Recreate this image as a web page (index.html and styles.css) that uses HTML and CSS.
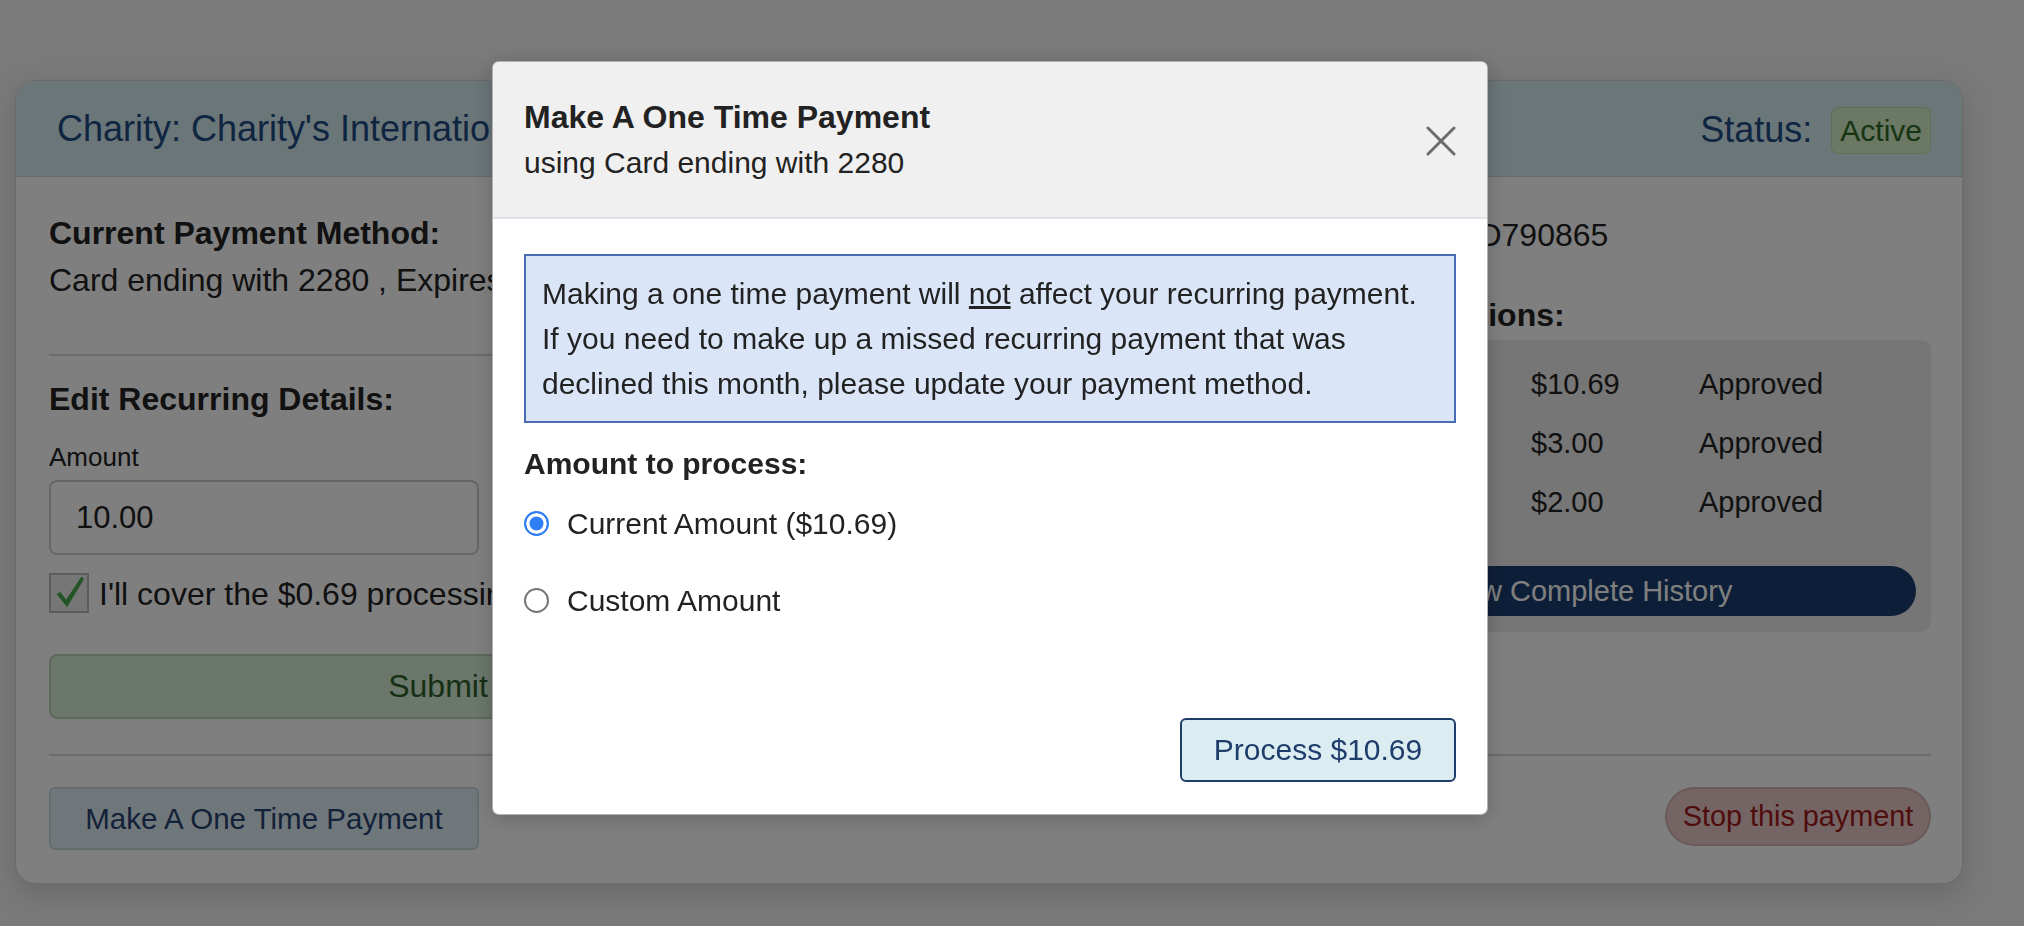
FILE: index.html
```html
<!DOCTYPE html>
<html lang="en">
<head>
  <meta charset="UTF-8" />
  <meta name="viewport" content="width=device-width, initial-scale=1.0" />
  <title>Recurring Donation</title>
  <link rel="stylesheet" href="styles.css">
</head>
<body>
  <div class="page">
    <section class="card">
      <header class="card-head">
        <h2>Charity: Charity's International</h2>
        <div class="status">Status: <span class="badge">Active</span></div>
      </header>
      <div class="card-body">
        <div class="cols">
          <div class="col-left">
            <p class="label-bold">Current Payment Method:</p>
            <p class="text">Card ending with 2280 , Expires</p>
            <hr class="sep">
            <p class="label-bold edit-title">Edit Recurring Details:</p>
            <label class="small-label" for="amount">Amount</label>
            <input id="amount" class="amount-input" type="text" value="10.00">
            <div class="cover-row">
              <span class="fake-check">
                <svg width="40" height="40" viewBox="0 0 40 40"><path d="M8 21 L12 19 L18 27 L34 3 L37 5 L19 35 Z" fill="#44a84a"/></svg>
              </span>
              <span>I'll cover the $0.69 processing fee</span>
            </div>
            <button class="btn-submit" type="button">Submit</button>
          </div>
          <div class="col-right">
            <p class="text ref-line">Reference ID: RD790865</p>
            <p class="label-bold tx-title">Recent Transactions:</p>
            <div class="tx-box">
              <div class="tx-row"><span>06/01/2024</span><span>$10.69</span><span>Approved</span></div>
              <div class="tx-row"><span>05/14/2024</span><span>$3.00</span><span>Approved</span></div>
              <div class="tx-row"><span>05/01/2024</span><span>$2.00</span><span>Approved</span></div>
              <button class="btn-history" type="button">View Complete History</button>
            </div>
          </div>
        </div>
        <hr class="sep bottom-sep">
        <div class="card-foot">
          <button class="btn-light" type="button">Make A One Time Payment</button>
          <button class="btn-stop" type="button">Stop this payment</button>
        </div>
      </div>
    </section>
  </div>

  <div class="backdrop"></div>

  <div class="modal-wrap">
    <div class="modal" role="dialog">
      <div class="modal-head">
        <div>
          <div class="modal-title">Make A One Time Payment</div>
          <div class="modal-sub">using Card ending with 2280</div>
        </div>
        <svg class="close" width="30" height="30" viewBox="0 0 30 30">
          <path d="M2 2 L28 28 M28 2 L2 28" stroke="#6c6c6c" stroke-width="3" stroke-linecap="round"/>
        </svg>
      </div>
      <div class="modal-body">
        <div class="info">
          Making a one time payment will <u>not</u> affect your recurring payment.
          If you need to make up a missed recurring payment that was
          declined this month, please update your payment method.
        </div>
        <div class="amount-title">Amount to process:</div>
        <label class="radio-row first">
          <input type="radio" name="amt" checked>
          Current Amount ($10.69)
        </label>
        <label class="radio-row second">
          <input type="radio" name="amt">
          Custom Amount
        </label>
        <div class="modal-foot">
          <button class="btn-process" type="button">Process $10.69</button>
        </div>
      </div>
    </div>
  </div>
</body>
</html>
```

FILE: styles.css
```css
* {
  box-sizing: border-box;
}
html, body {
  margin: 0;
  padding: 0;
}
body {
  font-family: 'Liberation Sans', Arial, sans-serif;
  color: #222;
  background: #f4f4f4;
  height: 926px;
  overflow: hidden;
}
.page {
  padding: 80px 0 0 15px;
}
.card {
  width: 1948px;
  background: #fff;
  border: 1px solid #d4d4d4;
  border-radius: 20px;
  box-shadow: 0 10px 30px rgba(0,0,0,0.15);
  overflow: hidden;
}
.card-head {
  height: 96px;
  display: flex;
  align-items: center;
  justify-content: space-between;
  padding: 0 31px 0 41px;
  background: #d6ecf0;
  border-bottom: 1px solid #c2d6da;
  color: #1f4b82;
  font-size: 36px;
}
.card-head h2 {
  margin: 0;
  font-size: 36px;
  font-weight: 400;
  white-space: nowrap;
}
.status {
  display: flex;
  align-items: center;
  gap: 19px;
  padding-top: 3px;
}
.badge {
  height: 47px;
  line-height: 45px;
  padding: 0 8px;
  font-size: 30px;
  color: #2f6b26;
  background: #d6f0c8;
  border: 1px solid #c0dab2;
  border-radius: 7px;
}
.card-body {
  padding: 33px 31px 33px 33px;
}
.cols {
  display: flex;
  justify-content: space-between;
}
.col-left {
  width: 778px;
  display: flex;
  flex-direction: column;
  align-items: flex-start;
}
.col-right {
  width: 690px;
}
.label-bold {
  margin: 0;
  font-size: 32px;
  line-height: 47px;
  font-weight: 700;
}
.text {
  margin: 0;
  font-size: 32px;
  line-height: 47px;
  white-space: nowrap;
}
.ref-line {
  padding: 2px 0 0 8px;
}
.sep {
  width: 100%;
  margin: 50px 0 0 0;
  border: none;
  border-top: 2px solid #d8d8d8;
}
.edit-title {
  margin-top: 20px;
}
.small-label {
  margin-top: 16px;
  font-size: 26px;
  line-height: 36px;
}
.amount-input {
  margin-top: 5px;
  width: 430px;
  height: 75px;
  padding: 0 25px;
  font-family: inherit;
  font-size: 31px;
  color: #222;
  border: 2px solid #c8cdd2;
  border-radius: 8px;
  background: #fff;
}
.cover-row {
  margin-top: 17px;
  display: flex;
  align-items: center;
  gap: 10px;
  font-size: 32px;
  white-space: nowrap;
}
.cover-row span:last-child {
  padding-top: 4px;
}
.fake-check {
  width: 40px;
  height: 40px;
  border: 2px solid #b8b8b8;
  background: #ececec;
  display: flex;
}
.fake-check svg {
  margin: -2px 0 0 -2px;
}
.btn-submit {
  margin-top: 41px;
  width: 100%;
  height: 65px;
  font-family: inherit;
  font-size: 32px;
  color: #2f5e2b;
  background: #d4eed4;
  border: 2px solid #bcd4bc;
  border-radius: 8px;
}
.tx-title {
  margin-top: 33px;
}
.tx-box {
  margin-top: 1px;
  padding: 15px 15px 16px 15px;
  background: #ececec;
  border-radius: 10px;
}
.tx-row {
  display: grid;
  grid-template-columns: 275px 168px 1fr;
  font-size: 29px;
  line-height: 59px;
}
.btn-history {
  margin-top: 34px;
  width: 100%;
  height: 50px;
  font-family: inherit;
  font-size: 29px;
  color: #fff;
  background: #1a3e70;
  border: none;
  border-radius: 25px;
}
.bottom-sep {
  margin-top: 35px;
}
.card-foot {
  margin-top: 31px;
  display: flex;
  justify-content: space-between;
  align-items: flex-start;
}
.btn-light {
  width: 430px;
  height: 63px;
  font-family: inherit;
  font-size: 29.5px;
  color: #264470;
  background: #e0eef6;
  border: 2px solid #c8d8e0;
  border-radius: 6px;
}
.btn-stop {
  width: 266px;
  height: 59px;
  font-family: inherit;
  font-size: 28.8px;
  color: #9e1a1a;
  background: #eac8c8;
  border: 2px solid #d4b4b4;
  border-radius: 30px;
}
/* modal */
.backdrop {
  position: fixed;
  inset: 0;
  background: rgba(0,0,0,0.5);
}
.modal-wrap {
  position: fixed;
  inset: 0;
  padding: 61px 0 0 492px;
}
.modal {
  width: 996px;
  height: 754px;
  background: #fff;
  border: 1px solid rgba(0,0,0,0.3);
  border-radius: 7px;
  overflow: hidden;
  display: flex;
  flex-direction: column;
  box-shadow: 0 4px 20px rgba(0,0,0,0.2);
}
.modal-head {
  display: flex;
  justify-content: space-between;
  align-items: center;
  padding: 35px 31px 32px 31px;
  background: #f0f0f0;
  border-bottom: 2px solid #dde3e8;
}
.modal-title {
  font-size: 32px;
  line-height: 40px;
  font-weight: 700;
}
.modal-sub {
  margin-top: 3px;
  font-size: 30px;
  line-height: 45px;
}
.modal-body {
  flex: 1;
  display: flex;
  flex-direction: column;
  padding: 35px 31px 32px 31px;
  font-size: 30px;
  line-height: 45px;
}
.info {
  padding: 15px 16px;
  background: #dae6f8;
  border: 2px solid #4a6cb3;
}
.amount-title {
  margin-top: 18px;
  font-weight: 700;
}
.radio-row {
  display: flex;
  align-items: center;
  gap: 18px;
}
.radio-row.first {
  margin-top: 15px;
}
.radio-row.second {
  margin-top: 32px;
}
.radio-row input {
  appearance: none;
  -webkit-appearance: none;
  width: 25px;
  height: 25px;
  margin: 0;
  border: 2px solid #767676;
  border-radius: 50%;
  background: #fff;
}
.radio-row input:checked {
  border-color: #2f7ef5;
  background: #2f7ef5;
  box-shadow: inset 0 0 0 3.5px #fff;
}
.modal-foot {
  margin-top: auto;
  display: flex;
  justify-content: flex-end;
}
.btn-process {
  width: 276px;
  height: 64px;
  font-family: inherit;
  font-size: 30px;
  color: #1f3d6b;
  background: #dcedf2;
  border: 2px solid #1f3d6b;
  border-radius: 6px;
}
```
